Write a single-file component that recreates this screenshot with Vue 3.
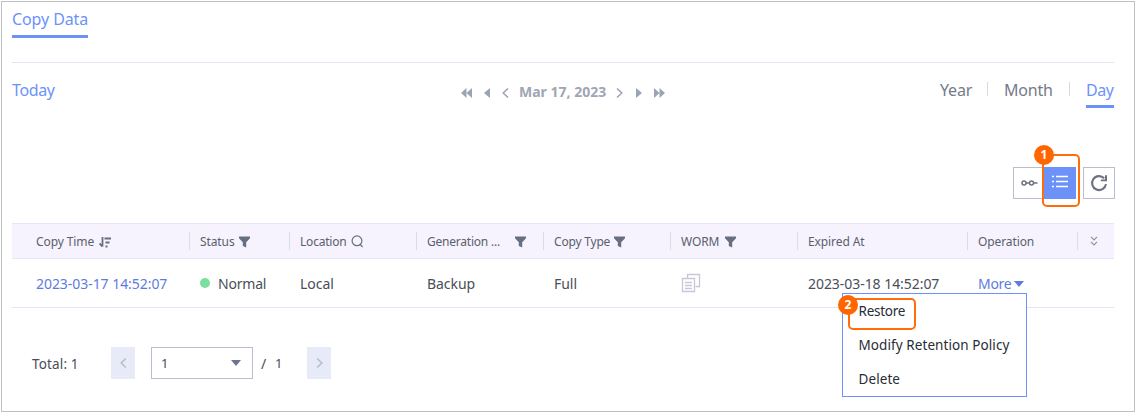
<script setup>
const columns = [
  { label: 'Copy Time', icon: 'sort', cls: 'c-time' },
  { label: 'Status', icon: 'filter', cls: 'c-status' },
  { label: 'Location', icon: 'search', cls: 'c-location' },
  { label: 'Generation ...', icon: 'filter', cls: 'c-generation' },
  { label: 'Copy Type', icon: 'filter', cls: 'c-type' },
  { label: 'WORM', icon: 'filter', cls: 'c-worm' },
  { label: 'Expired At', cls: 'c-expired' },
  { label: 'Operation', cls: 'c-operation' },
  { label: '', icon: 'expand', cls: 'c-expand' }
]
const menu = ['Restore', 'Modify Retention Policy', 'Delete']
</script>

<template>
  <main class="panel">
    <div class="tabs"><span class="tab">Copy Data</span></div>

    <div class="calendar">
      <span class="today">Today</span>
      <div class="pager">
        <svg class="i1" width="11" height="10" viewBox="0 0 11 10"><path d="M5.5 0v10L0 5zM11 0v10L5.5 5z" /></svg>
        <svg class="i2" width="6" height="10" viewBox="0 0 6 10"><path d="M6 0v10L0 5z" /></svg>
        <svg class="i3 line" width="7" height="10" viewBox="0 0 7 10"><path d="M6 .5L1.2 5 6 9.500" /></svg>
        <span class="date">Mar 17, 2023</span>
        <svg class="i4 line" width="7" height="10" viewBox="0 0 7 10"><path d="M1 .5L5.800 5 1 9.500" /></svg>
        <svg class="i5" width="6" height="10" viewBox="0 0 6 10"><path d="M0 0v10l6-5z" /></svg>
        <svg class="i6" width="11" height="10" viewBox="0 0 11 10"><path d="M0 0v10l5.500-5zM5.500 0v10L11 5z" /></svg>
      </div>
      <div class="ranges">
        <span class="year">Year</span><i></i><span class="month">Month</span><i></i><span class="day">Day</span>
      </div>
    </div>

    <div class="tools">
      <div class="tool timeline">
        <svg width="17" height="8" viewBox="0 0 17 8"><g fill="none" stroke="#6c7280" stroke-width="1.500"><circle cx="3" cy="4" r="2" /><circle cx="10.500" cy="4" r="2" /><path d="M5 4h3.500M12.500 4H16.500" /></g></svg>
      </div>
      <div class="tool list">
        <svg width="16" height="13" viewBox="0 0 16 13"><path d="M0 1.500h2M4 1.500h12M0 6.500h2M4 6.500h12M0 11.500h2M4 11.500h12" stroke="#fff" stroke-width="1.400" /></svg>
        <div class="mark mark-list"><b>1</b></div>
      </div>
      <div class="tool refresh">
        <svg width="18" height="18" viewBox="0 0 18 18"><path d="M14.200 4.300A7 7 0 1 0 16 10.200" fill="none" stroke="#6c7280" stroke-width="2.100" /><path d="M17 1.300v6h-6.200V5.500h4.200V1.300z" fill="#6c7280" /></svg>
      </div>
    </div>

    <div class="table">
      <div class="row head">
        <div v-for="c in columns" :key="c.cls" class="cell" :class="c.cls">
          <span v-if="c.label">{{ c.label }}</span>
          <svg v-if="c.icon === 'filter'" class="filter" width="11" height="12" viewBox="0 0 11 12"><path d="M0 .5h11v1.700L7.200 6.200V11.500L3.800 10V6.200L0 2.200z" fill="#686f80" /></svg>
          <svg v-if="c.icon === 'sort'" class="sort" width="12" height="11" viewBox="0 0 12 11"><path d="M3.500 0v9.500M.5 6.500L3.500 9.500" fill="none" stroke="#686f80" stroke-width="1.800" /><path d="M5.500 1.500H12M6.500 5.500h4M6.500 9.500h2" stroke="#686f80" stroke-width="1.900" /></svg>
          <svg v-if="c.icon === 'search'" class="search" width="13" height="13" viewBox="0 0 13 13"><g fill="none" stroke="#686f80" stroke-width="1.200"><circle cx="6" cy="5.800" r="4.900" /><path d="M8.800 9.200l2.800 2.800" /></g></svg>
          <svg v-if="c.icon === 'expand'" width="8" height="10" viewBox="0 0 8 10"><path d="M1 .8l3 3 3-3M1 5.800l3 3 3-3" fill="none" stroke="#8b91a0" stroke-width="1.200" /></svg>
        </div>
      </div>
      <div class="row body">
        <div class="cell c-time link">2023-03-17 14:52:07</div>
        <div class="cell c-status"><i class="dot"></i><span>Normal</span></div>
        <div class="cell c-location">Local</div>
        <div class="cell c-generation">Backup</div>
        <div class="cell c-type">Full</div>
        <div class="cell c-worm">
          <svg width="20" height="20" viewBox="0 0 20 20"><g fill="none" stroke="#c6c8da" stroke-width="1.300"><path d="M6.500 5.500V1.500h12v12H14.500" /><path d="M1.500 5.500h12v13h-12zM4 9.500h7M4 12.500h7M4 15.500h7" /></g></svg>
        </div>
        <div class="cell c-expired">2023-03-18 14:52:07</div>
        <div class="cell c-operation link">
          <span>More</span>
          <svg class="caret" width="10" height="6" viewBox="0 0 10 6"><path d="M0 0h10L5 6z" fill="#5e7ce0" /></svg>
          <div class="menu">
            <div v-for="m in menu" :key="m" class="item">{{ m }}</div>
            <div class="mark mark-menu"><b>2</b></div>
          </div>
        </div>
        <div class="cell"></div>
      </div>
    </div>

    <div class="pagination">
      <span class="total">Total: 1</span>
      <div class="step"><svg width="7" height="10" viewBox="0 0 7 10"><path d="M5.800 .5L1.200 5l4.600 4.500" /></svg></div>
      <div class="select"><span>1</span><svg width="10" height="6" viewBox="0 0 10 6"><path d="M0 0h10L5 6z" fill="#6c7590" /></svg></div>
      <span class="slash">/</span><span class="count">1</span>
      <div class="step next"><svg width="7" height="10" viewBox="0 0 7 10"><path d="M1.200 .5L5.800 5 1.200 9.500" /></svg></div>
    </div>
  </main>
</template>

<style>
html, body { background: #fff; overflow: hidden; }
</style>

<style scoped>
* { box-sizing: border-box; }
svg { display: block; flex: none; }
.panel { width: 1134px; height: 411px; margin: 1px 0 0 1px; border: 1px solid #bfc0c2; padding: 0 20px 0 10px; font-family: "Noto Sans", sans-serif; color: #4a4e58; white-space: nowrap; }
.tabs { height: 61px; border-bottom: 1px solid #e0e8f5; display: flex; align-items: flex-start; }
.tab { width: 76px; height: 36px; border-bottom: 3px solid #6c92fa; font-size: 16px; line-height: 35px; letter-spacing: -.1px; color: #6c92fa; }
.calendar { height: 45px; display: flex; position: relative; }
.today { width: 449px; font-size: 16px; line-height: 55px; letter-spacing: -.35px; color: #6c92fa; }
.pager { display: flex; align-items: center; height: 60px; width: 460px; fill: #9ca4b3; }
.line path { fill: none; stroke: #9ca4b3; stroke-width: 1.5; }
.i2 { margin-left: 12px; }
.i3 { margin-left: 12px; }
.date { width: 89px; margin: -3px 0 0 10px; font-size: 14px; font-weight: 700; color: #a0a6b4; }
.i4 { margin-left: 8px; }
.i5 { margin-left: 13px; }
.i6 { margin-left: 12px; }
.ranges { margin-left: auto; display: flex; font-size: 16px; line-height: 54px; height: 45px; color: #747b89; letter-spacing: -.2px; }
.ranges i { width: 1px; height: 14px; margin-top: 19px; background: #d5d9e4; }
.year { width: 47px; }
.month { width: 65px; margin-left: 16px; }
.day { width: 28px; margin-left: 16px; border-bottom: 3px solid #6c92fa; color: #6c92fa; letter-spacing: -.4px; }
.tools { display: flex; justify-content: flex-end; margin: 59px -1px 0 0; }
.tool { width: 32px; height: 32px; display: flex; align-items: center; justify-content: center; border: 1px solid #bcbdd0; }
.timeline { width: 31px; border-right: 0; }
.list { position: relative; background: #6c92fa; border: 0; }
.list > svg { margin-top: -3px; }
.refresh { margin-left: 7px; }
.mark { position: absolute; border: 2px solid #ff6c0a; border-radius: 5px; }
.mark b { position: absolute; width: 20px; height: 20px; border-radius: 50%; background: #ff6600; color: #fff; font-size: 12px; line-height: 20px; text-align: center; }
.mark-list { left: -2px; top: -13px; width: 38px; height: 53px; }
.mark-list b { left: -10px; top: -11px; }
.mark-menu { left: 5px; top: 4px; width: 68px; height: 32px; }
.mark-menu b { left: -12px; top: -5px; }
.table { margin-top: 24px; }
.row { display: grid; grid-template-columns: 177px 100px 127px 127px 127px 127px 170px 110px 37px; width: 1102px; }
.head { height: 36px; background: #f6f3ff; border: solid #e3e7f7; border-width: 1px 0; font-size: 12px; letter-spacing: -.1px; color: #5a606b; align-items: center; }
.body { height: 49px; border-bottom: 1px solid #e3e5f5; font-size: 14px; letter-spacing: -.05px; }
.cell { display: flex; align-items: center; padding-left: 11px; position: relative; }
.head .cell { height: 18px; border-left: 1px solid #d8dcea; padding-left: 10px; }
.head .cell span { margin-top: 1px; }
.head .cell.c-time { border-left: 0; padding-left: 24px; }
.c-time { padding-left: 24px; }
.link { color: #5e7ce0; }
.filter { margin: 2px 0 0 4px; }
.sort { margin: 2px 0 0 5px; }
.search { margin: 0 0 0 4px; }
.head .c-location span { letter-spacing: -.2px; }
.head .c-type span { letter-spacing: -.2px; }
.head .c-worm .filter { margin-left: 6px; }
.head .c-generation span { letter-spacing: -.22px; }
.c-generation .filter { margin-left: auto; margin-right: 17px; }
.head .c-expand { padding-left: 12px; }
.dot { width: 10px; height: 10px; border-radius: 50%; background: #7adfa0; margin-right: 8px; }
.c-status .dot + span { letter-spacing: -.2px; }
.body .c-operation > span { letter-spacing: -.3px; }
.caret { margin: 2px 0 0 3px; }
.menu { position: absolute; left: -125px; top: 34px; width: 185px; height: 104px; border: 1px solid #6c92fa; background: #fff; z-index: 2; color: #292c36; font-size: 13.5px; letter-spacing: .08px; }
.item { height: 34px; line-height: 34px; padding-left: 15.5px; }
.item:first-child { letter-spacing: -.25px; }
.pagination { display: flex; margin-top: 39px; height: 32px; font-size: 14px; line-height: 34px; }
.total { width: 79px; margin-left: 20px; font-size: 13.500px; letter-spacing: .15px; }
.step { width: 24px; height: 32px; background: #e7eaf7; display: flex; align-items: center; justify-content: center; }
.step path { fill: none; stroke: #b7bccb; stroke-width: 1.500; }
.select { width: 102px; margin-left: 16px; border: 1px solid #bcbdd0; display: flex; align-items: center; justify-content: space-between; padding: 0 11px 0 9px; font-size: 13px; }
.slash { margin-left: 8px; width: 14px; }
.count { width: 32px; line-height: 32px; font-size: 13px; }
</style>
